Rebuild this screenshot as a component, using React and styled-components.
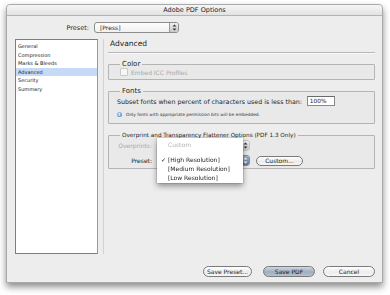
import React from "react";
import styled, { createGlobalStyle } from "styled-components";

const GlobalStyle = createGlobalStyle`
  html, body {
    margin: 0;
    padding: 0;
    background: #ffffff;
  }
  body {
    width: 390px;
    height: 295px;
    overflow: hidden;
    font-family: "DejaVu Sans", "Liberation Sans", sans-serif;
    color: #1a1a1a;
    -webkit-font-smoothing: antialiased;
  }
`;

// 창 전체
const Window = styled.div`
  margin: 4px 0 0 6px;
  width: 377px;
  height: 279px;
  box-sizing: border-box;
  border: 1px solid #a9a9a9;
  border-radius: 4px 4px 0 0;
  background: #ededed;
  box-shadow: 0 4px 7px rgba(0, 0, 0, 0.45);
  display: flex;
  flex-direction: column;
`;

const TitleBar = styled.div`
  height: 11px;
  border-bottom: 1px solid #b3b3b3;
  background: linear-gradient(#f6f6f6, #e2e2e2);
  border-radius: 4px 4px 0 0;
  display: flex;
  align-items: center;
  justify-content: center;
  font-size: 6.5px;
  color: #222;
`;

const Body = styled.div`
  flex: 1;
  display: flex;
  flex-direction: column;
  padding: 6px 7px 5px 8px;
`;

const PresetRow = styled.div`
  display: flex;
  align-items: center;
  height: 11px;
  padding-left: 50px;
`;

const Label = styled.span`
  font-size: ${(p) => p.size || 6}px;
  color: ${(p) => (p.disabled ? "#a8a8a8" : "#1e1e1e")};
  width: ${(p) => (p.width ? `${p.width}px` : "auto")};
  text-align: ${(p) => (p.width ? "right" : "left")};
  white-space: nowrap;
`;

// 팝업 버튼
const Popup = styled.div`
  width: ${(p) => p.width}px;
  height: 11px;
  box-sizing: border-box;
  border: 1px solid ${(p) => (p.disabled ? "#c4c4c4" : "#8d8d8d")};
  border-radius: 3px;
  background: linear-gradient(#fdfdfd, #f1f1f1);
  display: flex;
  align-items: center;
  margin-left: ${(p) => p.gap || 5}px;
  overflow: hidden;
`;

const PopupText = styled.span`
  flex: 1;
  padding-left: 5px;
  font-size: 6px;
  color: ${(p) => (p.disabled ? "#b0b0b0" : "#1e1e1e")};
`;

const Arrows = styled.div`
  margin-left: auto;
  width: 8px;
  height: 100%;
  border-left: 1px solid #9a9a9a;
  background: ${(p) =>
    p.blue
      ? "linear-gradient(#9fb0c6, #5f7694)"
      : "linear-gradient(#f0f0f0, #c8c8c8)"};
  display: flex;
  align-items: center;
  justify-content: center;
`;

const MainRow = styled.div`
  display: flex;
  height: 215px;
  margin-top: 6px;
`;

const Sidebar = styled.ul`
  list-style: none;
  margin: 0;
  padding: 2px 0 0;
  width: 83px;
  box-sizing: border-box;
  border: 1px solid #7d7d7d;
  border-right-color: #9a9a9a;
  background: #ffffff;
`;

const SideItem = styled.li`
  height: 8.6px;
  line-height: 8.6px;
  padding-left: 2px;
  font-size: 5px;
  color: #222;
  background: ${(p) => (p.active ? "#c6d9f5" : "transparent")};
`;

const Divider = styled.div`
  width: 1px;
  margin-left: 5px;
  background: #d2d2d2;
`;

const Content = styled.div`
  position: relative;
  margin-left: 4px;
  width: 267px;
  display: flex;
  flex-direction: column;
`;

const Heading = styled.div`
  height: 10px;
  line-height: 10px;
  font-size: 7.5px;
  padding-left: 2px;
`;

const Rule = styled.div`
  margin-top: 3px;
  height: 1px;
  background: #b8b8b8;
  border-bottom: 1px solid #f8f8f8;
`;

const Group = styled.fieldset`
  margin: ${(p) => p.top}px 0 0;
  padding: 0 0 0 8px;
  height: ${(p) => p.height}px;
  box-sizing: border-box;
  border: 1px solid #b4b4b4;
  border-radius: 1px;
  background: #e9e9e9;
  min-width: 0;
`;

const Legend = styled.legend`
  margin-left: 3px;
  padding: 0 2px;
  font-size: ${(p) => p.size || 7}px;
  line-height: 7px;
  color: #1e1e1e;
`;

const Row = styled.div`
  display: flex;
  align-items: center;
  height: ${(p) => p.height || 10}px;
  padding-left: ${(p) => p.indent || 0}px;
  margin-top: ${(p) => p.top || 0}px;
`;

const Check = styled.span`
  width: 6px;
  height: 6px;
  border: 1px solid #c8c8c8;
  border-radius: 1px;
  background: #f7f7f7;
  margin-right: 3px;
`;

const Field = styled.div`
  margin-left: 5px;
  width: 24px;
  height: 8px;
  border: 1px solid #8a8a8a;
  border-top-color: #6a6a6a;
  background: #fff;
  font-size: 5.8px;
  line-height: 8px;
  padding-left: 2px;
  box-sizing: content-box;
`;

const InfoIcon = styled.span`
  width: 5px;
  height: 5px;
  border-radius: 50%;
  background: radial-gradient(circle at 40% 35%, #b7d4f3, #3a74c0);
  color: #fff;
  font-size: 4px;
  line-height: 5px;
  text-align: center;
  font-weight: bold;
  margin-right: 4px;
`;

const Small = styled.span`
  font-size: 4.3px;
  color: #333;
`;

// 버튼 (pill)
const Button = styled.div`
  width: ${(p) => p.width}px;
  height: ${(p) => p.height || 11}px;
  box-sizing: border-box;
  border: 1px solid #7a7a7a;
  border-radius: 6px;
  background: ${(p) =>
    p.primary
      ? "linear-gradient(#cfd8e3, #9fadbf 55%, #b6c2d1)"
      : "linear-gradient(#ffffff, #ececec 55%, #f6f6f6)"};
  margin-left: ${(p) => p.gap || 0}px;
  display: flex;
  align-items: center;
  justify-content: center;
  font-size: 6px;
  color: #1e1e1e;
`;

const Footer = styled.div`
  display: flex;
  justify-content: flex-end;
  margin-top: 12px;
`;

// 열린 메뉴 (Preset 팝업 위에 떠 있음)
const Menu = styled.div`
  position: absolute;
  left: 49px;
  top: 99px;
  width: 86px;
  padding: 1.5px 0;
  background: #ffffff;
  box-shadow: 0 3px 6px rgba(0, 0, 0, 0.4), 0 0 0 0.5px rgba(0, 0, 0, 0.2);
  z-index: 2;
  will-change: transform;
`;

const MenuItem = styled.div`
  position: relative;
  height: 9px;
  line-height: 9px;
  padding-left: 11px;
  font-size: 6px;
  color: ${(p) => (p.disabled ? "#b3b3b3" : "#1e1e1e")};
  margin-bottom: ${(p) => p.after || 0}px;
`;

const Checkmark = styled.span`
  position: absolute;
  left: 4px;
  font-size: 6px;
`;

const ArrowIcon = ({ light }) => (
  <svg width="5" height="7" viewBox="0 0 5 7">
    <path d="M2.5 0.5 L4.5 2.6 H0.5 Z M2.5 6.5 L4.5 4.4 H0.5 Z" fill={light ? "#ffffff" : "#333"} />
  </svg>
);

const items = ["General", "Compression", "Marks & Bleeds", "Advanced", "Security", "Summary"];

export default function App() {
  return (
    <>
      <GlobalStyle />
      <Window>
        <TitleBar>Adobe PDF Options</TitleBar>
        <Body>
          <PresetRow>
            <Label size={6.5} width={24}>Preset:</Label>
            <Popup width={85}>
              <PopupText>[Press]</PopupText>
              <Arrows>
                <ArrowIcon />
              </Arrows>
            </Popup>
          </PresetRow>

          <MainRow>
            <Sidebar>
              {items.map((it) => (
                <SideItem key={it} active={it === "Advanced"}>
                  {it}
                </SideItem>
              ))}
            </Sidebar>
            <Divider />
            <Content>
              <Heading>Advanced</Heading>
              <Rule />

              <Group top={7} height={19}>
                <Legend>Color</Legend>
                <Row height={8} indent={3}>
                  <Check />
                  <Label size={6} disabled>Embed ICC Profiles</Label>
                </Row>
              </Group>

              <Group top={8} height={36}>
                <Legend>Fonts</Legend>
                <Row height={10} top={1}>
                  <Label size={6.3}>Subset fonts when percent of characters used is less than:</Label>
                  <Field>100%</Field>
                </Row>
                <Row height={8} top={4}>
                  <InfoIcon>i</InfoIcon>
                  <Small>Only fonts with appropriate permission bits will be embedded.</Small>
                </Row>
              </Group>

              <Group top={8} height={37}>
                <Legend size={5.7}>Overprint and Transparency Flattener Options (PDF 1.3 Only)</Legend>
                {/* 팝업 글자는 열린 메뉴가 덮고 있음 */}
                <Row height={10} top={1.5}>
                  <Label size={6} width={35} disabled>Overprints:</Label>
                  <Popup width={93} disabled>
                    <Arrows>
                      <ArrowIcon />
                    </Arrows>
                  </Popup>
                </Row>
                <Row height={11} top={4.5}>
                  <Label size={6} width={35}>Preset:</Label>
                  <Popup width={93}>
                    <Arrows blue>
                      <ArrowIcon light />
                    </Arrows>
                  </Popup>
                  <Button width={47} height={10} gap={6}>Custom...</Button>
                </Row>
              </Group>

              <Menu>
                <MenuItem disabled after={6}>Custom</MenuItem>
                <MenuItem>
                  <Checkmark>✓</Checkmark>[High Resolution]
                </MenuItem>
                <MenuItem>[Medium Resolution]</MenuItem>
                <MenuItem>[Low Resolution]</MenuItem>
              </Menu>
            </Content>
          </MainRow>

          <Footer>
            <Button width={49}>Save Preset...</Button>
            <Button width={52} gap={11} primary>Save PDF</Button>
            <Button width={52} gap={8}>Cancel</Button>
          </Footer>
        </Body>
      </Window>
    </>
  );
}
